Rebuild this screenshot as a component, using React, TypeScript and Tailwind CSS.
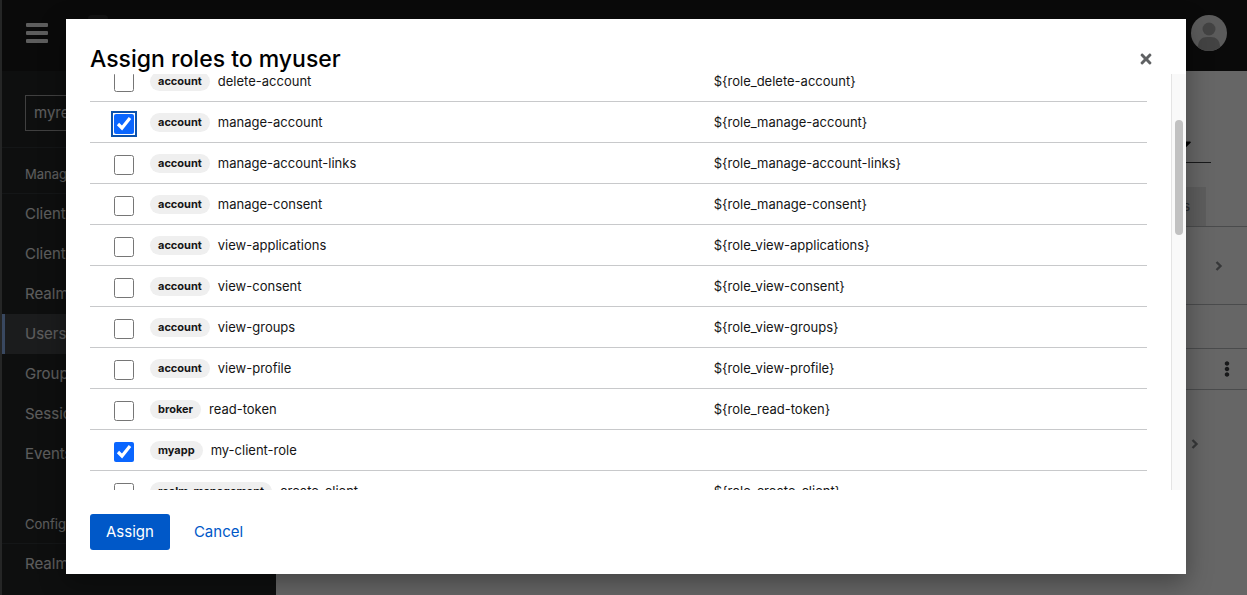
import { useState } from 'react'
import { FaCaretDown, FaEllipsisV, FaTimes } from 'react-icons/fa'

const initialRoles = [
  { client: 'account', name: 'delete-account', checked: false },
  { client: 'account', name: 'manage-account', checked: true },
  { client: 'account', name: 'manage-account-links', checked: false },
  { client: 'account', name: 'manage-consent', checked: false },
  { client: 'account', name: 'view-applications', checked: false },
  { client: 'account', name: 'view-consent', checked: false },
  { client: 'account', name: 'view-groups', checked: false },
  { client: 'account', name: 'view-profile', checked: false },
  { client: 'broker', name: 'read-token', checked: false },
  { client: 'myapp', name: 'my-client-role', checked: true, custom: true },
  { client: 'realm-management', name: 'create-client', checked: false },
]

const manageItems = ['Clients', 'Client scopes', 'Realm roles', 'Users', 'Groups', 'Sessions', 'Events']

function NavItem({ label, active }: { label: string; active?: boolean }) {
  return (
    <a
      href="#"
      className={`flex h-10 items-center border-l-[3px] pl-5 text-[15px] ${
        active ? 'border-[#8fb4f0] bg-[#454749]' : 'border-transparent'
      }`}
    >
      {label}
    </a>
  )
}

function Sidebar() {
  return (
    <nav className="w-[276px] shrink-0 border-l-2 border-[#5c5f60] bg-[#232727] text-[#e8e8e8]">
      <div className="border-b border-[#34383a] px-[23px] pt-6 pb-4">
        <button className="flex h-9 w-full items-center justify-between border border-[#a0a0a0] px-2 text-[15px]">
          myrealm
          <FaCaretDown size={12} />
        </button>
      </div>
      <h2 className="flex h-[46px] items-center border-b border-[#34383a] px-[23px] pt-2 text-[13px]">Manage</h2>
      {manageItems.map((item) => (
        <NavItem key={item} label={item} active={item === 'Users'} />
      ))}
      <h2 className="mt-6 flex h-[46px] items-center border-b border-[#34383a] px-[23px] pt-2 text-[13px]">
        Configure
      </h2>
      <NavItem label="Realm settings" />
    </nav>
  )
}

function Chevron() {
  return (
    <svg width="8" height="10" viewBox="0 0 8 10" fill="none" stroke="#8a8d90" strokeWidth="2.4" aria-hidden="true">
      <path d="M1.5 1l4 4-4 4" />
    </svg>
  )
}

function UserPage() {
  return (
    <main className="flex-1 bg-white text-[#3c3f42]">
      <div className="mr-9 flex h-[92px] items-end justify-end border-b border-[#3c3f42] pr-4 pb-2 text-black">
        <FaCaretDown size={20} />
      </div>
      <div className="mt-6 flex h-10 justify-end border-b border-[#b8bbbe] pr-[41px]">
        <button className="bg-[#e8e8e8] px-4 text-[13px] text-[#6a6e73]">Identity provider links</button>
      </div>
      <div className="flex h-[78px] items-center justify-end border-b border-[#b8bbbe] pr-6">
        <Chevron />
      </div>
      <div className="h-11 border-b border-[#b8bbbe]" />
      <div className="flex h-[41px] items-center justify-end border-b border-[#b8bbbe] pr-3">
        <FaEllipsisV size={16} />
      </div>
      <div className="flex h-[108px] items-center justify-end pr-12">
        <Chevron />
      </div>
    </main>
  )
}

export default function App() {
  const [roles, setRoles] = useState(initialRoles)

  const toggle = (index: number) => {
    setRoles(roles.map((r, i) => (i === index ? { ...r, checked: !r.checked } : r)))
  }

  return (
    <div className="relative flex h-screen flex-col overflow-hidden font-['Inter',sans-serif]">
      <header className="flex h-[71px] shrink-0 items-center border-l-2 border-[#5c5f60] bg-[#1b1b1b] pr-5 pb-[5px] pl-6 text-[#e8e8e8]">
        <button aria-label="Global navigation">
          <svg width="22" height="20" viewBox="0 0 22 20" fill="currentColor" aria-hidden="true">
            <rect y="0" width="22" height="4" rx="1" />
            <rect y="8" width="22" height="4" rx="1" />
            <rect y="16" width="22" height="4" rx="1" />
          </svg>
        </button>
        <div className="ml-10 h-9 w-5 rounded bg-[#303030]" />
        <svg className="ml-auto" width="36" height="36" viewBox="0 0 36 36" aria-hidden="true">
          <clipPath id="avatar">
            <circle cx="18" cy="18" r="18" />
          </clipPath>
          <g clipPath="url(#avatar)">
            <rect width="36" height="36" fill="#e4e4e4" />
            <circle cx="18" cy="14" r="6.5" fill="#a8a8a8" />
            <path d="M7 36v-4c0-7 4-10 9-10h4c5 0 9 3 9 10v4z" fill="#a8a8a8" />
          </g>
        </svg>
      </header>
      <div className="flex min-h-0 flex-1">
        <Sidebar />
        <UserPage />
      </div>

      {/* Backdrop */}
      <div className="absolute inset-0 flex bg-black/60 pt-[19px] pr-[61px] pb-[21px] pl-[66px]">
        <div
          role="dialog"
          aria-modal="true"
          aria-labelledby="modal-title"
          className="flex min-w-0 flex-1 flex-col bg-white text-[#151515] shadow-[0_8px_24px_rgba(0,0,0,0.35)]"
        >
          <div className="flex shrink-0 items-center justify-between pt-[25px] pr-8 pl-6">
            <h1 id="modal-title" className="text-[23px] leading-[30px] font-medium text-black">
              Assign roles to myuser
            </h1>
            <button aria-label="Close" className="text-[#5f6163]">
              <FaTimes size={16} />
            </button>
          </div>

          <div className="flex min-h-0 flex-1">
            <div className="min-w-0 flex-1 overflow-hidden pr-6 pl-6">
              <table className="-mt-[14px] w-full table-fixed text-[13px]">
                <colgroup>
                  <col className="w-[60px]" />
                  <col />
                  <col className="w-[41%]" />
                </colgroup>
                <tbody>
                  {roles.map((role, i) => (
                    <tr key={role.name} className="h-[41px] border-b border-[#c8c9cb]">
                      <td className="pt-1 pl-6 align-middle">
                        <input
                          type="checkbox"
                          checked={role.checked}
                          onChange={() => toggle(i)}
                          aria-label={`Select ${role.name}`}
                          className={`block size-5 accent-[#0a66ff] ${
                            role.name === 'manage-account' ? 'rounded-xs outline-2 outline-offset-1 outline-[#0a52ad]' : ''
                          }`}
                        />
                      </td>
                      <td className="pt-0.5">
                        <div className="flex items-center gap-2">
                          <span className="rounded-full bg-[#efefef] px-2 text-[11px] leading-[19px] font-bold">
                            {role.client}
                          </span>
                          {role.name}
                        </div>
                      </td>
                      <td className="pt-0.5">{role.custom ? '' : `\${role_${role.name}}`}</td>
                    </tr>
                  ))}
                </tbody>
              </table>
            </div>
            <div className="w-[15px] shrink-0 border-l border-[#e4e4e4] bg-[#f9f9f9] pt-[46px] pl-[3px]">
              <div className="h-[115px] w-2 rounded-full bg-[#c1c1c1]" />
            </div>
          </div>

          <div className="flex shrink-0 items-center gap-2 p-6 text-[15px]">
            <button className="h-9 rounded-[3px] bg-[#0058c8] px-4 text-white">Assign</button>
            <button className="h-9 px-4 text-[#0058c8]">Cancel</button>
          </div>
        </div>
      </div>
    </div>
  )
}
